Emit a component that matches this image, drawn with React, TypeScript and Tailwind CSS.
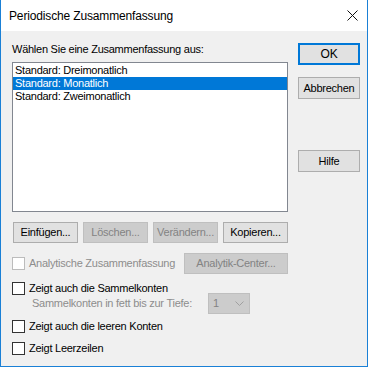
import React, { useState } from 'react';

const font = { fontFamily: '"Liberation Sans", Arial, sans-serif' };

const Btn: React.FC<{ label: string; disabled?: boolean; w?: string }> = ({ label, disabled, w = 'w-[65px]' }) => (
  <button
    disabled={disabled}
    className={`${w} h-[21px] flex items-center justify-center text-[11px] leading-none border ${
      disabled ? 'bg-[#cccccc] border-[#bfbfbf] text-[#838383]' : 'bg-[#e1e1e1] border-[#adadad] text-black'
    }`}
  >
    {label}
  </button>
);

const Check: React.FC<{ label: string; disabled?: boolean }> = ({ label, disabled }) => (
  <label className="flex items-center h-[13px] gap-[4px]">
    <span className={`w-[13px] h-[13px] border bg-white ${disabled ? 'border-[#bcbcbc]' : 'border-[#333333]'}`} />
    <span className={`text-[11px] leading-[13px] ${disabled ? 'text-[#8d8d8d]' : 'text-black'}`}>{label}</span>
  </label>
);

export default function App() {
  const items = ['Standard: Dreimonatlich', 'Standard: Monatlich', 'Standard: Zweimonatlich'];
  const [sel, setSel] = useState(1);

  return (
    <div style={font} className="w-[368px] h-[367px] flex flex-col bg-[#f0f0f0] border-x border-b border-[#1a80d6] tracking-[-0.25px]">
      <div className="h-[31px] bg-white flex items-center justify-between pl-[8px] pr-[9px]">
        <span className="text-[12px] tracking-[-0.15px] text-black">Periodische Zusammenfassung</span>
        <svg width="11" height="11" viewBox="0 0 11 11">
          <path d="M0.5 0.5 L10.5 10.5 M10.5 0.5 L0.5 10.5" stroke="#111" strokeWidth="1" />
        </svg>
      </div>

      <div className="flex pl-[11px] pt-[12px]">
        <div className="w-[276px] flex flex-col">
          <div className="text-[11px] leading-[13px] text-black">Wählen Sie eine Zusammenfassung aus:</div>
          <div className="mt-[6px] h-[150px] border border-[#828790] bg-white pt-[1px]">
            {items.map((it, i) => (
              <div
                key={it}
                onClick={() => setSel(i)}
                className={`h-[13px] pl-[2px] text-[11px] leading-[13px] ${i === sel ? 'bg-[#0078d7] text-white' : 'text-black'}`}
              >
                {it}
              </div>
            ))}
          </div>

          <div className="mt-[10px] pl-[1px] flex justify-between">
            <Btn label="Einfügen..." />
            <Btn label="Löschen..." disabled />
            <Btn label="Verändern..." disabled />
            <Btn label="Kopieren..." />
          </div>

          <div className="mt-[10px] flex items-center justify-between">
            <Check label="Analytische Zusammenfassung" disabled />
            <Btn label="Analytik-Center..." disabled w="w-[104px]" />
          </div>

          <div className="mt-[8px]">
            <Check label="Zeigt auch die Sammelkonten" />
          </div>
          <div className="-mt-[2px] h-[21px] flex items-center pl-[20px]">
            <span className="w-[176px] text-[11px] text-[#8d8d8d]">Sammelkonten in fett bis zur Tiefe:</span>
            <div className="w-[42px] h-[21px] bg-[#cccccc] border border-[#bfbfbf] flex items-center justify-between pl-[4px] pr-[5px]">
              <span className="text-[11px] text-[#838383]">1</span>
              <svg width="9" height="5" viewBox="0 0 9 5">
                <path d="M0.5 0.5 L4.5 4.5 L8.5 0.5" fill="none" stroke="#a0a0a0" strokeWidth="1" />
              </svg>
            </div>
          </div>

          <div className="mt-[6px]">
            <Check label="Zeigt auch die leeren Konten" />
          </div>
          <div className="mt-[9px]">
            <Check label="Zeigt Leerzeilen" />
          </div>
        </div>

        <div className="ml-[10px] flex flex-col">
          <button className="w-[62px] h-[22px] bg-[#e1e1e1] border-2 border-[#0078d7] text-[12px] text-black flex items-center justify-center">
            OK
          </button>
          <button className="mt-[12px] w-[62px] h-[22px] bg-[#e1e1e1] border border-[#adadad] text-[11px] text-black flex items-center justify-center">
            Abbrechen
          </button>
          <button className="mt-[51px] w-[62px] h-[22px] bg-[#e1e1e1] border border-[#adadad] text-[11px] text-black flex items-center justify-center">
            Hilfe
          </button>
        </div>
      </div>
    </div>
  );
}
